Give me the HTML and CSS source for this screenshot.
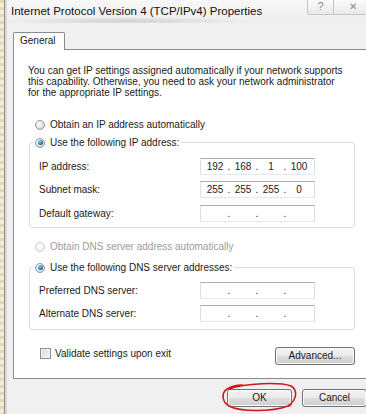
FILE: index.html
```html
<!DOCTYPE html>
<html lang="en">
<head>
  <meta charset="UTF-8">
  <title>Internet Protocol Version 4 (TCP/IPv4) Properties</title>
  <meta name="viewport" content="width=device-width, initial-scale=1.0">
  <link rel="stylesheet" href="styles.css">
</head>
<body>

<div class="window">
  <div class="edge"></div>
  <div class="main">
    <div class="titlebar">
      <span class="title">Internet Protocol Version 4 (TCP/IPv4) Properties</span>
      <div class="caption">
        <span class="cap help">?</span>
        <span class="cap close">&#x2715;</span>
      </div>
    </div>

    <div class="client">
      <div class="tabs">
        <span class="tab">General</span>
      </div>

      <div class="panel">
        <div class="inner">
          <p class="intro">You can get IP settings assigned automatically if your network supports<br>this capability. Otherwise, you need to ask your network administrator<br>for the appropriate IP settings.</p>

          <div class="opt first"><span class="radio"></span>Obtain an IP address automatically</div>

          <fieldset class="group ip-group">
            <legend class="opt"><span class="radio on"></span>Use the following IP address:</legend>
            <div class="row">
              <span class="label">IP address:</span>
              <div class="ipbox"><span>192</span><i>.</i><span>168</span><i>.</i><span>1</span><i>.</i><span>100</span></div>
            </div>
            <div class="row">
              <span class="label">Subnet mask:</span>
              <div class="ipbox"><span>255</span><i>.</i><span>255</span><i>.</i><span>255</span><i>.</i><span>0</span></div>
            </div>
            <div class="row">
              <span class="label">Default gateway:</span>
              <div class="ipbox"><span></span><i>.</i><span></span><i>.</i><span></span><i>.</i><span></span></div>
            </div>
          </fieldset>

          <div class="opt disabled"><span class="radio"></span>Obtain DNS server address automatically</div>

          <fieldset class="group dns-group">
            <legend class="opt"><span class="radio on"></span>Use the following DNS server addresses:</legend>
            <div class="row">
              <span class="label">Preferred DNS server:</span>
              <div class="ipbox"><span></span><i>.</i><span></span><i>.</i><span></span><i>.</i><span></span></div>
            </div>
            <div class="row">
              <span class="label">Alternate DNS server:</span>
              <div class="ipbox"><span></span><i>.</i><span></span><i>.</i><span></span><i>.</i><span></span></div>
            </div>
          </fieldset>

          <div class="bottom-row">
            <div class="check"><span class="box"></span>Validate settings upon exit</div>
            <button class="btn advanced">Advanced...</button>
          </div>
        </div>
      </div>

      <div class="buttons">
        <button class="btn">OK</button>
        <button class="btn">Cancel</button>
        <svg class="circle" width="90" height="40" viewBox="0 0 90 40">
          <path d="M9 8 C 25 2, 60 1, 71 5 C 78 9, 77 19, 68 25 C 52 31, 20 31, 9 25 C 2 21, 1 12, 7 8 C 12 5, 18 4, 22 4" fill="none" stroke="#d0151b" stroke-width="1.6" stroke-linecap="round"/>
        </svg>
      </div>
    </div>
  </div>
</div>

</body>
</html>
```

FILE: styles.css
```css
html, body {
  margin: 0;
  padding: 0;
  width: 366px;
  height: 414px;
  overflow: hidden;
  background: #f0f0f0;
}
body {
  font-family: "Liberation Sans", Arial, sans-serif;
  font-size: 10px;
  color: #1a1a1a;
}
.window {
  display: flex;
  height: 414px;
  overflow: hidden;
}
.edge {
  width: 7px;
  flex: none;
  background:
    repeating-linear-gradient(to bottom, #e2dab2 0 3px, #f1eddb 3px 7px) 0 0 / 4px 100% no-repeat,
    linear-gradient(to right, #eeeadb 0 4px, #8e8e8e 4px 5px, #d9d9d9 5px 7px);
}
.main {
  flex: 1;
  display: flex;
  flex-direction: column;
  min-width: 0;
}
.titlebar {
  height: 23px;
  display: flex;
  justify-content: space-between;
  align-items: flex-start;
  background:
    radial-gradient(ellipse 120px 4px at 120px 21px, rgba(120, 120, 120, 0.25), transparent),
    linear-gradient(#f8f8f8, #ededed);
}
.title {
  font-size: 11.5px;
  color: #111;
  padding: 5px 0 0 4px;
}
.caption {
  display: flex;
  margin-right: -7px;
}
.cap {
  height: 14px;
  border: 1px solid #c4c4c4;
  border-top: none;
  background: linear-gradient(#fbfbfb, #e9e9e9);
  color: #8a8a8a;
  text-align: center;
  line-height: 13px;
  font-size: 11px;
}
.help {
  width: 25px;
  border-radius: 0 0 0 3px;
}
.close {
  width: 38px;
  border-left: none;
  font-size: 10px;
}
.client {
  flex: 1;
  padding: 9px 0 0 6px;
  background: #f0f0f0;
}
.tabs {
  display: flex;
  margin-bottom: -1px;
}
.tab {
  width: 40px;
  height: 17px;
  line-height: 16px;
  padding: 0 4px 0 6px;
  border: 1px solid #898c95;
  border-bottom: none;
  border-radius: 2px 2px 0 0;
  background: #fff;
}
.panel {
  border: 1px solid #898c95;
  background: #fff;
  margin-right: -30px;
  padding: 14px 0 13px 14px;
}
.inner {
  width: 327px;
}
.intro {
  margin: 0;
  line-height: 11px;
  padding-top: 1px;
}
.opt {
  display: flex;
  align-items: center;
  height: 13px;
  margin-left: 7px;
}
.opt.first {
  margin-top: 20px;
}
.opt.disabled {
  margin-top: 12.5px;
  color: #9c9c9c;
}
.radio {
  width: 10px;
  height: 10px;
  margin-right: 5px;
  border: 1px solid #8f9aa3;
  border-radius: 50%;
  box-sizing: border-box;
  background: radial-gradient(circle at 40% 35%, #ffffff, #d8dadc 70%, #c6c9cc);
  display: flex;
  align-items: center;
  justify-content: center;
}
.disabled .radio {
  border-color: #c9cdd1;
  background: radial-gradient(circle at 40% 35%, #ffffff, #e8e9ea);
}
.radio.on::after {
  content: "";
  width: 5px;
  height: 5px;
  border-radius: 50%;
  background: radial-gradient(circle at 40% 35%, #8fd6f5, #1f7fab 55%, #0b3f5c);
}
.group {
  margin: 5px 0 0 1px;
  padding: 8.5px 9px 5px 9px;
  border: 1px solid #d5dfe5;
  border-radius: 3px;
  min-width: 0;
}
.group legend {
  margin-left: -6px;
  padding: 0 2px;
  height: 13px;
}
.dns-group {
  margin-top: 8px;
  padding-top: 7.5px;
  padding-bottom: 7px;
}
.row {
  display: flex;
  align-items: center;
  height: 17px;
}
.row + .row {
  margin-top: 6.5px;
}
.dns-group .row + .row {
  margin-top: 6px;
}
.label {
  width: 161px;
}
.ipbox {
  width: 115px;
  height: 17px;
  box-sizing: border-box;
  display: flex;
  align-items: center;
  padding-left: 3px;
  border: 1px solid #dbdfe6;
  border-top-color: #abadb3;
  border-bottom-color: #e3e9ef;
  background: #fff;
  color: #222;
}
.ipbox span {
  width: 22px;
  text-align: center;
}
.ipbox i {
  width: 6px;
  font-style: normal;
  text-align: center;
}
.bottom-row {
  display: flex;
  justify-content: space-between;
  align-items: center;
  margin-top: 17px;
}
.check {
  display: flex;
  align-items: center;
  margin-left: 12px;
  margin-top: -4px;
}
.box {
  width: 11px;
  height: 11px;
  box-sizing: border-box;
  margin-right: 4px;
  border: 1px solid #8f8f8f;
  background: linear-gradient(135deg, #d9d9d9, #f7f7f7);
  box-shadow: inset 0 0 0 1px #f2f2f2;
}
.btn {
  height: 18px;
  padding: 0;
  font-family: "Liberation Sans", Arial, sans-serif;
  font-size: 10px;
  color: #1a1a1a;
  border: 1px solid #707070;
  border-radius: 3px;
  background: linear-gradient(#f2f2f2 0%, #ebebeb 50%, #dddddd 51%, #cfcfcf 100%);
  box-shadow: inset 0 0 0 1px #fcfcfc;
}
.advanced {
  width: 80px;
}
.buttons {
  display: flex;
  gap: 10px;
  margin-top: 10px;
  padding-left: 214px;
  position: relative;
}
.buttons .btn {
  width: 65px;
  flex: none;
}
.circle {
  position: absolute;
  left: 207px;
  top: -8px;
}
```
